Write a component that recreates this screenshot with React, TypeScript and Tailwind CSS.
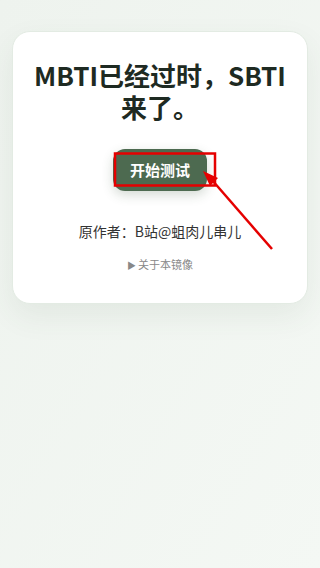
export default function App() {
  return (
    <div
      className="relative min-h-[568px] w-full bg-gradient-to-br from-[#eef3ee] to-[#f4f8f4] px-3 pt-[31px]"
      style={{ fontFamily: '"Noto Sans CJK SC", "Noto Sans", sans-serif' }}
    >
      <div className="flex flex-col items-center rounded-[18px] border border-[#e3ebe3] bg-white px-2 pt-[27px] pb-[29px] shadow-[0_12px_30px_rgba(60,90,60,0.08)]">
        <h1 className="whitespace-nowrap text-center text-[26px] font-bold leading-[32px] text-[#1e2a22]">
          MBTI已经过时，SBTI
          <br />
          来了。
        </h1>
        <button className="mt-[26px] rounded-[12px] bg-[#4d6a50] px-[17px] py-[10px] text-[15px] font-bold leading-[22px] text-white shadow-[0_4px_12px_rgba(40,70,40,0.2)]">
          开始测试
        </button>
        <p className="mt-[30px] text-[14px] leading-[20px] text-[#333]">原作者：B站@蛆肉儿串儿</p>
        <p className="mt-[15px] text-[11px] leading-[16px] text-[#888]">
          <span className="mr-0.5 text-[9px]">▶</span>关于本镜像
        </p>
      </div>

      {/* annotation overlay */}
      <svg className="pointer-events-none absolute left-0 top-0" width="320" height="568">
        <rect x="115" y="153.5" width="100" height="32" fill="none" stroke="#e50000" strokeWidth="2.5" />
        <line x1="272" y1="249" x2="212" y2="180" stroke="#e50000" strokeWidth="2.5" />
        <polygon points="203,171 218,178 210,186" fill="#e50000" />
      </svg>
    </div>
  );
}
